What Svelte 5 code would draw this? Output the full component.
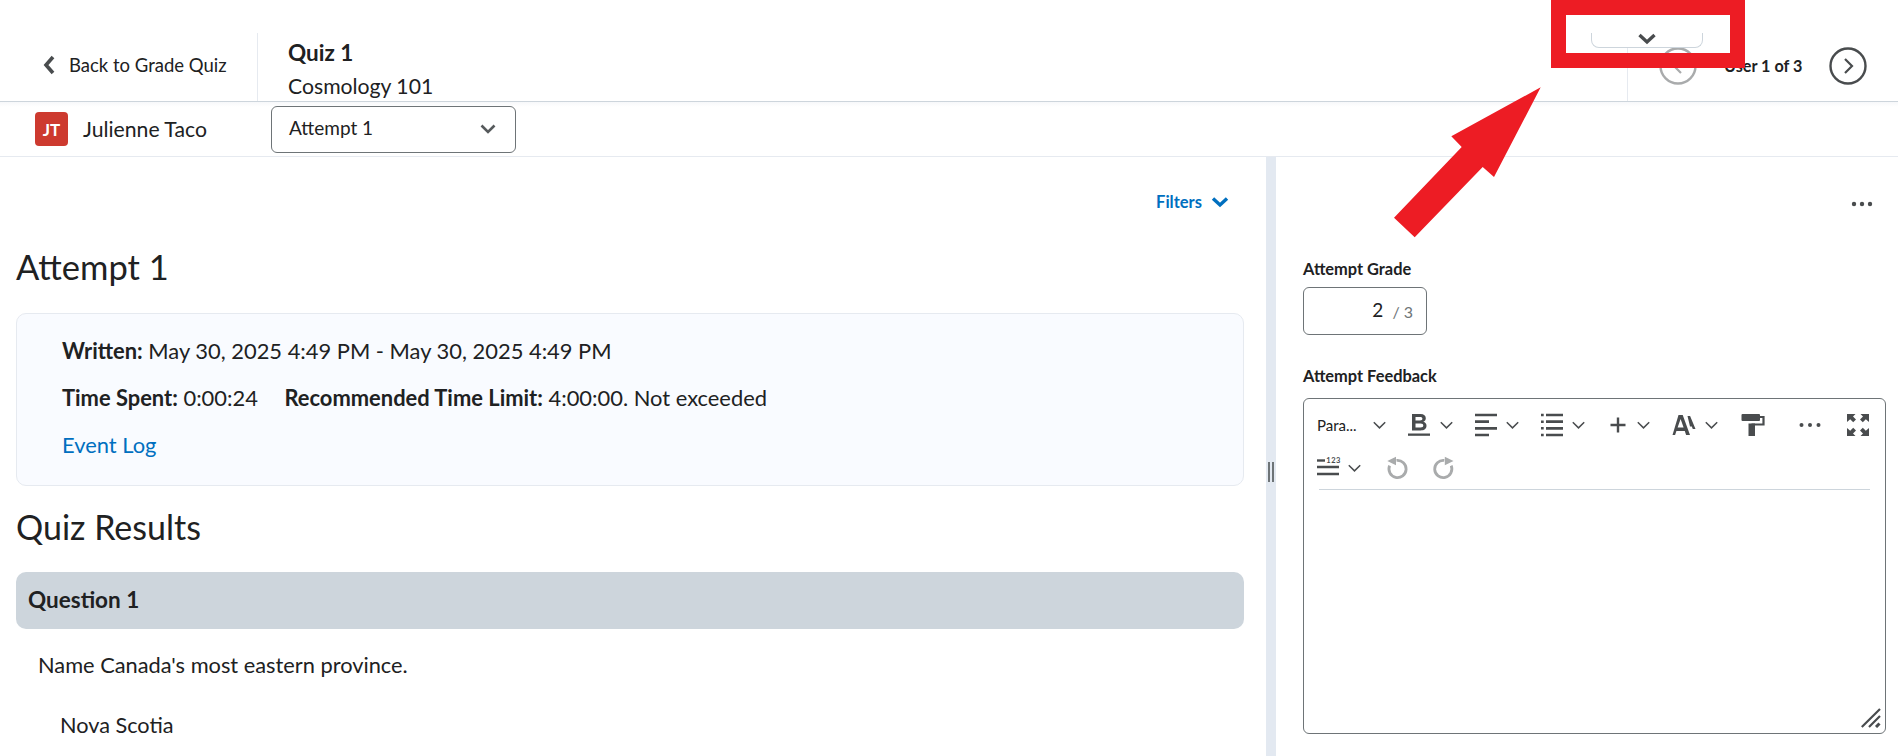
<script>
	const toolbarChevron = 'M.8 1.200l5.700 5.700 5.700-5.700';
</script>

<div class="page">
	<header class="top">
		<div class="back">
			<svg class="back__icon" width="14" height="20" viewBox="0 0 14 20"><path d="M11 2L4 10l7 8" fill="none" stroke="#494c4e" stroke-width="3.6"/></svg>
			<span>Back to Grade Quiz</span>
		</div>
		<div class="title">
			<h1>Quiz 1</h1>
			<p>Cosmology 101</p>
		</div>
		<div class="pager">
			<svg class="pager__btn" width="40" height="40" viewBox="0 0 40 40"><circle cx="20" cy="20" r="17.500" fill="#fff" stroke="#a9abac" stroke-width="2.400"/><path d="M23 13l-7 7 7 7" fill="none" stroke="#a9abac" stroke-width="2.200"/></svg>
			<span class="pager__text">User 1 of 3</span>
			<svg class="pager__btn" width="40" height="40" viewBox="0 0 40 40"><circle cx="20" cy="20" r="17.500" fill="#fff" stroke="#494c4e" stroke-width="2.400"/><path d="M17 13l7 7-7 7" fill="none" stroke="#494c4e" stroke-width="2.200"/></svg>
		</div>
	</header>

	<div class="user-row">
		<div class="user">
			<span class="avatar">JT</span>
			<span class="user__name">Julienne Taco</span>
		</div>
		<div class="select">
			<span>Attempt 1</span>
			<svg width="18" height="12" viewBox="0 0 18 12"><path d="M2.500 2.500l6.500 6.500 6.500-6.500" fill="none" stroke="#565a5c" stroke-width="2.600"/></svg>
		</div>
	</div>

	<main class="panes">
		<section class="left">
			<div class="filters">
				<span>Filters</span>
				<svg width="18" height="12" viewBox="0 0 18 12"><path d="M2 2.500L9 9l7-6.500" fill="none" stroke="#006fbf" stroke-width="3.400"/></svg>
			</div>
			<h2 class="attempt-title">Attempt 1</h2>
			<div class="summary">
				<p><b>Written:</b> May 30, 2025 4:49 PM - May 30, 2025 4:49 PM</p>
				<p><b>Time Spent:</b> 0:00:24 <b class="limit">Recommended Time Limit:</b> 4:00:00. Not exceeded</p>
				<p class="link">Event Log</p>
			</div>
			<h2 class="results-title">Quiz Results</h2>
			<div class="question-bar">Question 1</div>
			<p class="question">Name Canada's most eastern province.</p>
			<p class="answer">Nova Scotia</p>
		</section>

		<div class="splitter"><span class="splitter__handle"></span></div>

		<aside class="right">
			<div class="more">
				<svg width="22" height="6" viewBox="0 0 22 6"><circle cx="3" cy="3" r="2.200" fill="#494c4e"/><circle cx="11" cy="3" r="2.200" fill="#494c4e"/><circle cx="19" cy="3" r="2.200" fill="#494c4e"/></svg>
			</div>
			<div class="label">Attempt Grade</div>
			<div class="grade">
				<span class="grade__value">2</span>
				<span class="grade__max">/ 3</span>
			</div>
			<div class="label label--feedback">Attempt Feedback</div>
			<div class="editor">
				<div class="toolbar">
					<div class="tools">
						<span class="tool tool--para">Para...</span>
						<svg class="chev chev--para" width="13" height="9" viewBox="0 0 13 9"><path d={toolbarChevron} fill="none" stroke="#494c4e" stroke-width="1.500"/></svg>
						<svg class="icon icon--bold" width="24" height="24" viewBox="0 0 24 24"><path d="M5 1h8.500c3.500 0 5.300 1.700 5.300 4.300 0 1.800-1 3-2.500 3.500 2 .5 3.200 1.900 3.200 4 0 3-2.200 4.700-5.800 4.700H5zM8.500 4v3.400h4.500c1.600 0 2.400-.6 2.400-1.700S14.600 4 13 4zM8.500 10.400v4.100h5c2 0 2.800-.7 2.800-2s-.8-2.100-2.800-2.100z" fill="#494c4e" fill-rule="evenodd"/><rect x="1" y="20.500" width="22" height="2.300" fill="#494c4e"/></svg>
						<svg class="chev chev--bold" width="13" height="9" viewBox="0 0 13 9"><path d={toolbarChevron} fill="none" stroke="#494c4e" stroke-width="1.500"/></svg>
						<svg class="icon icon--align" width="24" height="24" viewBox="0 0 24 24"><path d="M1 2h22M1 8.700h14M1 15.300h22M1 22h14" stroke="#494c4e" stroke-width="2.700"/></svg>
						<svg class="chev chev--align" width="13" height="9" viewBox="0 0 13 9"><path d={toolbarChevron} fill="none" stroke="#494c4e" stroke-width="1.500"/></svg>
						<svg class="icon icon--list" width="24" height="24" viewBox="0 0 24 24"><path d="M6 2h17M6 8.700h17M6 15.300h17M6 22h17" stroke="#494c4e" stroke-width="2.700"/><path d="M1 2h2.700M1 8.700h2.700M1 15.300h2.700M1 22h2.700" stroke="#494c4e" stroke-width="2.400"/></svg>
						<svg class="chev chev--list" width="13" height="9" viewBox="0 0 13 9"><path d={toolbarChevron} fill="none" stroke="#494c4e" stroke-width="1.500"/></svg>
						<svg class="icon icon--plus" width="18" height="18" viewBox="0 0 18 18"><path d="M9 1.500v15M1.500 9h15" stroke="#494c4e" stroke-width="2.400"/></svg>
						<svg class="chev chev--plus" width="13" height="9" viewBox="0 0 13 9"><path d={toolbarChevron} fill="none" stroke="#494c4e" stroke-width="1.500"/></svg>
						<svg class="icon icon--font" width="24" height="22" viewBox="0 0 24 22"><path d="M6.500 1h4.200L18 21h-3.900l-1.300-4H4.400l-1.300 4H.5zM5.600 13.500h6L8.600 5z" fill="#494c4e" fill-rule="evenodd"/><path d="M15.500 2h2.600l5.400 13h-2.700l-1-2.600h-1.800z" fill="#494c4e"/></svg>
						<svg class="chev chev--font" width="13" height="9" viewBox="0 0 13 9"><path d={toolbarChevron} fill="none" stroke="#494c4e" stroke-width="1.500"/></svg>
						<svg class="icon icon--paint" width="24" height="22" viewBox="0 0 24 22"><rect x="0.500" y="0" width="18.500" height="7" rx="1" fill="#494c4e"/><path d="M19 3h3.500v7.500H10.500" fill="none" stroke="#494c4e" stroke-width="2.200"/><rect x="7.500" y="9.500" width="6.500" height="12.500" fill="#494c4e"/></svg>
						<svg class="icon icon--dots" width="22" height="6" viewBox="0 0 22 6"><circle cx="2.500" cy="3" r="2" fill="#494c4e"/><circle cx="11" cy="3" r="2" fill="#494c4e"/><circle cx="19.500" cy="3" r="2" fill="#494c4e"/></svg>
						<svg class="icon icon--full" width="24" height="22" viewBox="0 0 24 22"><path d="M1 0h8.500L7 2.500l3 3-2.800 2.800-3-3L1 8zM23 0h-8.500L17 2.500l-3 3 2.800 2.800 3-3L23 8zM1 22h8.500L7 19.500l3-3-2.800-2.800-3 3L1 14zM23 22h-8.500l2.500-2.500-3-3 2.800-2.800 3 3L23 14z" fill="#494c4e"/></svg>
					</div>
					<div class="tools tools--second">
						<svg class="icon icon--count" width="24" height="22" viewBox="0 0 24 22"><path d="M0 3.500h8" stroke="#494c4e" stroke-width="2.400"/><text x="9.300" y="6.300" class="count-text">123</text><path d="M0 10h22M0 17h22" stroke="#494c4e" stroke-width="2.700"/></svg>
						<svg class="chev chev--count" width="13" height="9" viewBox="0 0 13 9"><path d={toolbarChevron} fill="none" stroke="#494c4e" stroke-width="1.500"/></svg>
						<svg class="icon icon--undo" width="24" height="26" viewBox="0 0 24 26"><path d="M10.500 5.400A8.600 8.600 0 1 1 3.600 10.600" fill="none" stroke="#a9abac" stroke-width="2.800"/><path d="M1.300 6L10 1.700v8.600z" fill="#a9abac"/></svg>
						<svg class="icon icon--redo" width="24" height="26" viewBox="0 0 24 26"><path d="M13.300 5.400A8.600 8.600 0 1 0 20.200 10.600" fill="none" stroke="#a9abac" stroke-width="2.800"/><path d="M22.500 6l-8.700-4.300v8.600z" fill="#a9abac"/></svg>
					</div>
				</div>
				<svg class="resize" width="20" height="20" viewBox="0 0 20 20"><path d="M.8 19L19 1M8 19L19 8" stroke="#494c4e" stroke-width="2.200"/><path d="M15 19l3.500-3.500" stroke="#494c4e" stroke-width="3"/></svg>
			</div>
		</aside>
	</main>

	<!-- annotation layered on top of the screenshot -->
	<div class="tab">
		<svg width="20" height="12" viewBox="0 0 20 12"><path d="M2.500 2L10 9l7.500-7" fill="none" stroke="#494c4e" stroke-width="3.400"/></svg>
	</div>
	<div class="callout-box"></div>
	<svg class="callout-arrow" width="1898" height="756" viewBox="0 0 1898 756">
		<polygon points="1540.700,87.300 1451.300,136.300 1461.700,147 1394,217.700 1414.700,237.300 1482.700,167 1494,177" fill="#ed1c24"/>
	</svg>
</div>

<style>
	:global(body) {
		margin: 0;
		background: #fff;
	}
	.page {
		position: relative;
		width: 1898px;
		height: 756px;
		overflow: hidden;
		background: #fff;
		color: #202122;
		font-family: Lato, "Open Sans", sans-serif;
	}
	.top {
		display: flex;
		align-items: flex-end;
		height: 101px;
		border-bottom: 1px solid #cdd5dc;
	}
	.back {
		display: flex;
		align-items: center;
		gap: 13px;
		box-sizing: border-box;
		width: 258px;
		height: 68px;
		padding: 0 0 5px 42px;
		border-right: 1px solid #e6eaf0;
		font-size: 18.500px;
		white-space: nowrap;
	}
	.back__icon {
		flex: none;
	}
	.title {
		padding: 0 0 0 30px;
	}
	.title h1 {
		margin: 0;
		font-size: 22.500px;
		font-weight: 700;
		line-height: 30px;
	}
	.title p {
		margin: 3px 0 0;
		font-size: 21.200px;
		line-height: 30px;
	}
	.pager {
		display: flex;
		align-items: center;
		box-sizing: border-box;
		height: 54px;
		width: 271px;
		margin-left: auto;
		padding: 0 30px 16px;
		border-left: 1px solid #e6eaf0;
	}
	.pager__btn {
		flex: none;
	}
	.pager__text {
		margin: 0 0 2px 26px;
		width: 105px;
		font-size: 16.200px;
		font-weight: 700;
		white-space: nowrap;
	}
	.user-row {
		display: flex;
		align-items: center;
		height: 54px;
		border-bottom: 1px solid #e6eaf0;
		background: linear-gradient(#f7f8fa, #fff 5px);
	}
	.user {
		display: flex;
		align-items: center;
		gap: 15px;
		width: 271px;
		padding-left: 35px;
		box-sizing: border-box;
	}
	.avatar {
		display: flex;
		align-items: center;
		justify-content: center;
		width: 33px;
		height: 34px;
		border-radius: 4px;
		background: #cd3a2f;
		color: #fff;
		font-size: 17px;
		font-weight: 700;
	}
	.user__name {
		font-size: 21.200px;
	}
	.select {
		display: flex;
		align-items: center;
		justify-content: space-between;
		box-sizing: border-box;
		width: 245px;
		height: 47px;
		padding: 0 18px 0 17px;
		border: 1px solid #6e7477;
		border-radius: 6px;
		background: #fff;
		font-size: 19px;
		color: #202122;
	}
	.select span {
		margin-top: -4px;
	}
	.panes {
		display: grid;
		grid-template-columns: 1266px 10px 1fr;
		height: 600px;
	}
	.left {
		padding: 0 22px 0 16px;
		min-width: 0;
	}
	.filters {
		display: flex;
		align-items: center;
		justify-content: flex-end;
		gap: 9px;
		height: 22px;
		margin: 34px 15px 0 0;
		font-size: 16.500px;
		font-weight: 700;
		color: #006fbf;
	}
	.attempt-title {
		margin: 30px 0 0;
		font-size: 34.500px;
		font-weight: 400;
		line-height: 48px;
	}
	.summary {
		box-sizing: border-box;
		height: 173px;
		margin-top: 22px;
		padding: 25px 45px 0;
		border: 1px solid #e6eaf0;
		border-radius: 10px;
		background: #f9fbff;
		font-size: 21.900px;
	}
	.summary p {
		margin: 0 0 23px;
		line-height: 24px;
		white-space: nowrap;
	}
	.summary b {
		font-weight: 700;
	}
	.limit {
		margin-left: 21px;
	}
	.link {
		color: #006fbf;
	}
	.results-title {
		margin: 17px 0 0;
		font-size: 34px;
		font-weight: 400;
		line-height: 48px;
	}
	.question-bar {
		display: flex;
		align-items: center;
		box-sizing: border-box;
		height: 57px;
		margin-top: 21px;
		padding: 0 0 2px 12px;
		border-radius: 10px;
		background: #cdd5dc;
		font-size: 22.500px;
		font-weight: 700;
	}
	.question {
		margin: 24px 0 0 22px;
		font-size: 21.800px;
		line-height: 24px;
	}
	.answer {
		margin: 36px 0 0 44px;
		font-size: 21.700px;
		line-height: 24px;
	}
	.splitter {
		display: flex;
		align-items: flex-start;
		justify-content: center;
		background: #e3e9f1;
	}
	.splitter__handle {
		width: 6px;
		height: 20px;
		margin-top: 305px;
		border-left: 2px solid #6e7477;
		border-right: 2px solid #6e7477;
		box-sizing: border-box;
	}
	.right {
		padding: 0 12px 0 27px;
		min-width: 0;
	}
	.more {
		display: flex;
		justify-content: flex-end;
		height: 47px;
		padding: 44px 13px 0 0;
		box-sizing: border-box;
	}
	.label {
		margin-top: 55px;
		font-size: 16.400px;
		font-weight: 700;
		line-height: 20px;
	}
	.label--feedback {
		margin-top: 31px;
	}
	.grade {
		display: flex;
		align-items: center;
		justify-content: flex-end;
		gap: 9px;
		box-sizing: border-box;
		width: 124px;
		height: 48px;
		margin-top: 8px;
		padding: 0 13px 0 0;
		border: 1px solid #6e7477;
		border-radius: 6px;
	}
	.grade__value {
		font-size: 19px;
		margin-top: -3px;
	}
	.grade__max {
		font-size: 16px;
		color: #6e7477;
	}
	.editor {
		position: relative;
		box-sizing: border-box;
		width: 583px;
		height: 336px;
		margin-top: 12px;
		border: 1px solid #6e7477;
		border-radius: 6px;
	}
	.toolbar {
		box-sizing: border-box;
		height: 91px;
		margin: 0 15px;
		border-bottom: 1px solid #cdd5dc;
	}
	.tools {
		display: flex;
		align-items: center;
		height: 52px;
		margin-left: -2px;
	}
	.tools--second {
		height: 34px;
	}
	.tool--para {
		width: 42px;
		font-size: 15px;
		white-space: nowrap;
	}
	.icon,
	.chev {
		flex: none;
	}
	.chev--para { margin-left: 14.500px; }
	.icon--bold { margin-left: 21.500px; }
	.chev--bold { margin-left: 8.500px; }
	.icon--align { margin-left: 21.500px; }
	.chev--align { margin-left: 7.500px; }
	.icon--list { margin-left: 21.500px; }
	.chev--list { margin-left: 7.500px; }
	.icon--plus { margin-left: 24.500px; }
	.chev--plus { margin-left: 9.500px; }
	.icon--font { margin-left: 22.500px; }
	.chev--font { margin-left: 8.500px; }
	.icon--paint { margin-left: 23.500px; }
	.icon--dots { margin-left: 34px; }
	.icon--full { margin-left: 25px; }
	.chev--count { margin-left: 6.500px; }
	.icon--undo { margin-left: 25.500px; }
	.icon--redo { margin-left: 21px; }
	.count-text {
		font-size: 7.500px;
		font-weight: 700;
		letter-spacing: 0.500px;
		fill: #494c4e;
		font-family: Lato, sans-serif;
	}
	.resize {
		position: absolute;
		right: 4px;
		bottom: 5px;
	}
	.tab {
		position: absolute;
		left: 1591px;
		top: 33px;
		display: flex;
		justify-content: center;
		box-sizing: border-box;
		width: 112px;
		height: 15px;
		border: 1px solid #cdd5dc;
		border-top: 0;
		border-radius: 0 0 8px 8px;
		background: #fff;
	}
	.callout-box {
		position: absolute;
		left: 1551px;
		top: 0;
		box-sizing: border-box;
		width: 194px;
		height: 68px;
		border: 15px solid #ed1c24;
	}
	.callout-arrow {
		position: absolute;
		left: 0;
		top: 0;
		pointer-events: none;
	}
</style>
